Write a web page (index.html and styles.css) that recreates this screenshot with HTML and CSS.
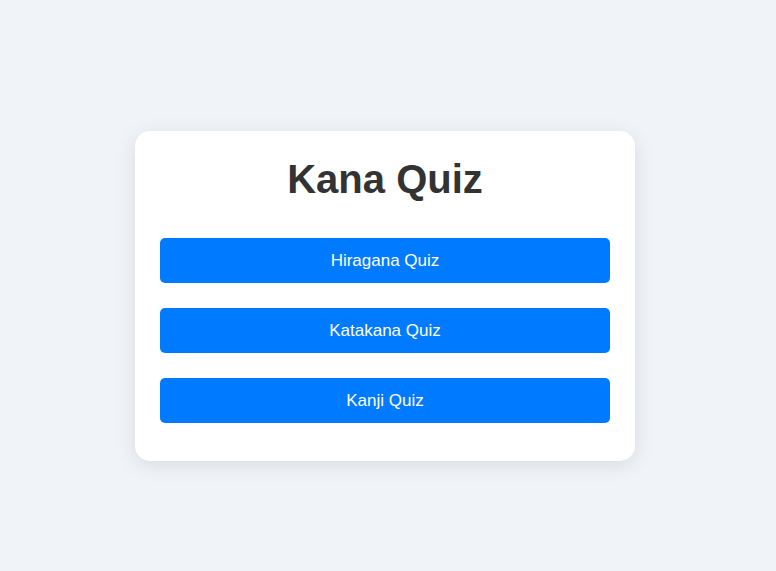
FILE: index.html
```html
<!DOCTYPE html>
<html lang="en">
<head>
<meta charset="utf-8">
<title>Kana Quiz</title>
<link rel="stylesheet" href="styles.css">
</head>
<body>
<main class="card">
  <h1 class="title">Kana Quiz</h1>
  <div class="menu">
    <button class="btn">Hiragana Quiz</button>
    <button class="btn">Katakana Quiz</button>
    <button class="btn">Kanji Quiz</button>
  </div>
</main>
</body>
</html>
```

FILE: styles.css
```css
html, body {
  margin: 0;
  padding: 0;
}
body {
  background: #f0f3f7;
  font-family: "Liberation Sans", Arial, sans-serif;
  min-height: 571px;
  box-sizing: border-box;
  display: flex;
  justify-content: center;
  align-items: flex-start;
  padding: 131px 6px 0 0;
}
.card {
  width: 500px;
  box-sizing: border-box;
  background: #ffffff;
  border-radius: 15px;
  box-shadow: 0 4px 20px rgba(0, 0, 0, 0.1);
  padding: 25px 25px 38px;
}
.title {
  margin: 0 0 36px;
  text-align: center;
  font-size: 40px;
  font-weight: bold;
  color: #333333;
  line-height: 46px;
}
.menu {
  display: flex;
  flex-direction: column;
  gap: 25px;
}
.btn {
  display: block;
  width: 100%;
  height: 45px;
  border: none;
  border-radius: 5px;
  background: #007bff;
  color: #ffffff;
  font-family: "Liberation Sans", Arial, sans-serif;
  font-size: 17px;
  padding: 0;
  cursor: pointer;
}
```
